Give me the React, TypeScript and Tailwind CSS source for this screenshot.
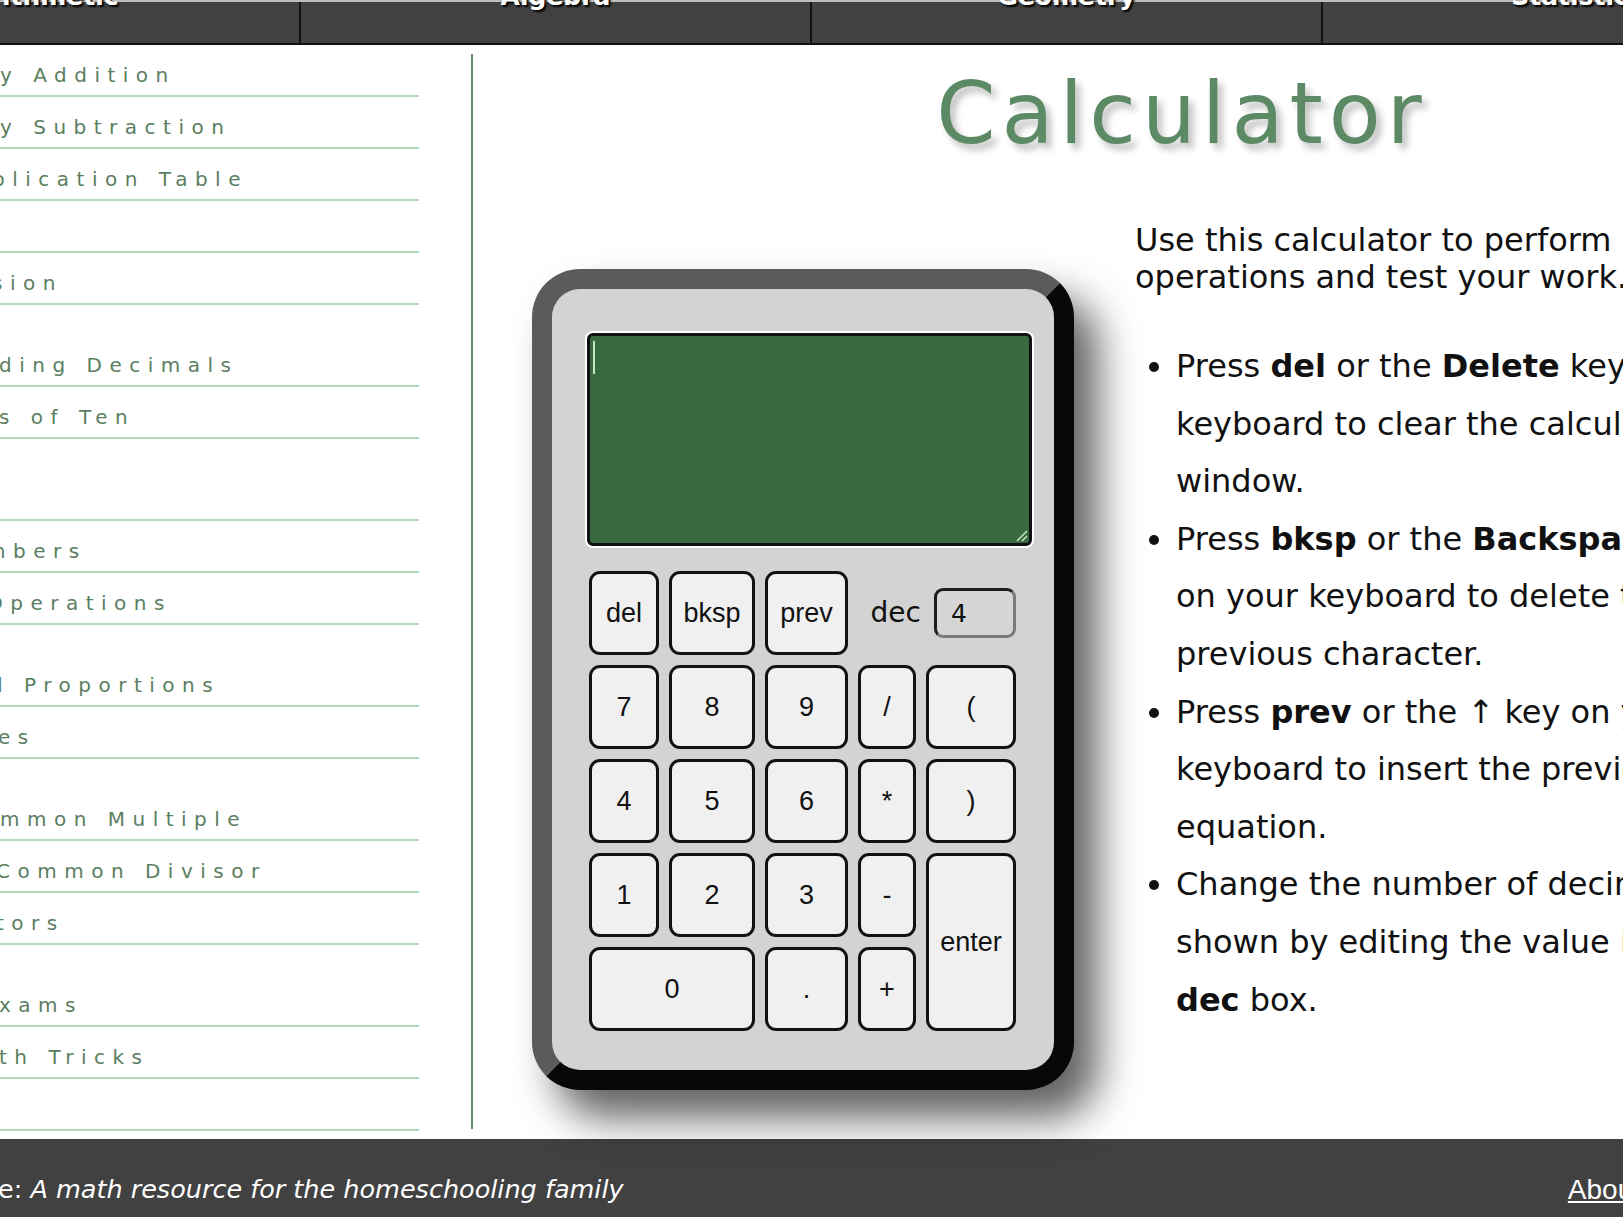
import type { ReactNode } from 'react'

const verdana = "font-['DejaVu_Sans','Verdana',sans-serif]"
const arial = "font-['Liberation_Sans','Arial',sans-serif]"

const navItems = ['Arithmetic', 'Algebra', 'Geometry', 'Statistics', 'Resources']

// visible part of each sidebar link; the page is scrolled so the start is cut off
const linkGroups: { text: string; shift: string }[][] = [
  [
    { text: 'y Addition', shift: 'ml-0' },
    { text: 'y Subtraction', shift: 'ml-0' },
    { text: 'plication Table', shift: '-ml-[8px]' },
    { text: '', shift: 'ml-0' },
    { text: 'sion', shift: '-ml-[8px]' },
  ],
  [
    { text: 'ding Decimals', shift: '-ml-[1px]' },
    { text: 's of Ten', shift: '-ml-[1px]' },
  ],
  [
    { text: '', shift: 'ml-0' },
    { text: 'mbers', shift: '-ml-[14px]' },
    { text: 'Operations', shift: '-ml-[13px]' },
  ],
  [
    { text: 'd Proportions', shift: '-ml-[10px]' },
    { text: 'es', shift: '-ml-[2px]' },
  ],
  [
    { text: 'mmon Multiple', shift: 'ml-0' },
    { text: 'Common Divisor', shift: '-ml-[4px]' },
    { text: 'tors', shift: '-ml-[4px]' },
  ],
  [
    { text: 'xams', shift: '-ml-[1px]' },
    { text: 'th Tricks', shift: '-ml-[1px]' },
    { text: '', shift: 'ml-0' },
  ],
]

function Key({ children, className = '' }: { children: ReactNode; className?: string }) {
  return (
    <button
      className={`flex items-center justify-center bg-[#f0f0f0] border-[3px] border-[#111] rounded-[11px] text-[27px] text-[#111] ${arial} ${className}`}
    >
      {children}
    </button>
  )
}

function Calculator() {
  return (
    <div className="w-[542px] h-[821px] shrink-0 mt-[50px] ml-[59px] border-[20px] border-t-[#5b5b5b] border-l-[#5b5b5b] border-r-[#080808] border-b-[#080808] rounded-[48px] bg-[#d3d3d3] pt-[44px] pl-[35px] shadow-[24px_28px_40px_rgba(0,0,0,0.62)]">
      {/* display */}
      <div className="relative w-[445px] h-[213px] bg-[#386a41] border-[3px] border-[#111] rounded-[6px] shadow-[0_0_0_2px_#fff]">
        <span className="absolute left-[3px] top-[5px] w-[2px] h-[33px] bg-[#c4e6bd]" />
        <svg className="absolute right-[1px] bottom-[1px]" width="13" height="13" viewBox="0 0 13 13">
          <line x1="12" y1="2" x2="2" y2="12" stroke="#cfe8c9" strokeWidth="1.5" />
          <line x1="12" y1="7" x2="7" y2="12" stroke="#cfe8c9" strokeWidth="1.5" />
        </svg>
      </div>

      {/* keys */}
      <div className="mt-[25px] ml-[2px] grid grid-cols-[70px_86px_83px_58px_90px] grid-rows-[84px_84px_84px_84px_84px] gap-[10px]">
        <Key>del</Key>
        <Key>bksp</Key>
        <Key>prev</Key>
        <div className="col-span-2 flex items-center justify-end gap-[13px]">
          <span className={`text-[28px] text-[#111] ${verdana}`}>dec</span>
          <input
            defaultValue="4"
            readOnly
            className={`w-[82px] h-[50px] border-[3px] border-t-[#1e1e1e] border-l-[#1e1e1e] border-r-[#7a7a7a] border-b-[#7a7a7a] rounded-[9px] bg-[#d6d6d6] pl-[14px] text-[25px] text-[#111] outline-none ${verdana}`}
          />
        </div>
        <Key>7</Key>
        <Key>8</Key>
        <Key>9</Key>
        <Key>/</Key>
        <Key>(</Key>
        <Key>4</Key>
        <Key>5</Key>
        <Key>6</Key>
        <Key>*</Key>
        <Key>)</Key>
        <Key>1</Key>
        <Key>2</Key>
        <Key>3</Key>
        <Key>-</Key>
        <Key className="row-span-2">enter</Key>
        <Key className="col-span-2">0</Key>
        <Key>.</Key>
        <Key>+</Key>
      </div>
    </div>
  )
}

export default function App() {
  return (
    <div className={`w-[1623px] h-[1217px] overflow-hidden bg-white ${verdana}`}>
      {/* top nav */}
      <header className="w-[2400px] -ml-[210px] h-[45px] flex bg-[#414141] border-t-2 border-t-[#bdbdbd] border-b-2 border-b-[#111]">
        {navItems.map(item => (
          <div key={item} className="w-[511px] shrink-0 border-r-2 border-[#111]">
            <span className="block -mt-[19px] text-center text-[25px] leading-[28px] font-bold text-white [text-shadow:2px_2px_2px_#000]">
              {item}
            </span>
          </div>
        ))}
      </header>

      <div className="flex items-start">
        {/* Sidebar */}
        <aside className="w-[471px] shrink-0">
          {linkGroups.map((group, gi) => (
            <ul key={gi} className={`w-[419px] ${gi > 0 ? 'mt-[30px]' : ''}`}>
              {group.map((link, li) => (
                <li
                  key={li}
                  className="h-[52px] border-b-2 border-[#b4d9bb] flex items-end pb-[8px] overflow-hidden"
                >
                  <span className={`whitespace-nowrap text-[20px] leading-[24px] tracking-[7.5px] text-[#5a7e60] ${link.shift}`}>
                    {link.text}
                  </span>
                </li>
              ))}
            </ul>
          ))}
        </aside>

        {/* Main content */}
        <main className="w-[1420px] shrink-0 mt-[9px] h-[1075px] border-l-2 border-[#6a8c6e] pt-[17px]">
          <h1 className="text-center text-[85px] leading-none tracking-[6px] text-[#5b8a64] [text-shadow:5px_6px_7px_rgba(0,0,0,0.25)]">
            Calculator
          </h1>

          <div className="flex items-start mt-[63px]">
            <Calculator />

            <div className="w-[631px] shrink-0 ml-[61px] mt-[3px] text-[32px] text-[#111]">
              <p className="leading-[37px] mb-[42px]">
                Use this calculator to perform basic operations and test your work.
              </p>
              <ul className="list-disc pl-[41px] leading-[57.6px]">
                <li>
                  Press <b>del</b> or the <b>Delete</b> key on your keyboard to clear the calculator window.
                </li>
                <li>
                  Press <b>bksp</b> or the <b>Backspace</b> key on your keyboard to delete the previous character.
                </li>
                <li>
                  Press <b>prev</b> or the ↑ key on your keyboard to insert the previous equation.
                </li>
                <li>
                  Change the number of decimals shown by editing the value in the <b>dec</b> box.
                </li>
              </ul>
            </div>
          </div>
        </main>
      </div>

      {/* Footer */}
      <footer className="w-[1700px] mt-[8px] h-[78px] bg-[#414141] flex items-start justify-between pt-[35px] pr-[59px] text-white">
        <p className="-ml-[2px] text-[25.5px] leading-[30px] whitespace-nowrap">
          e: <i>A math resource for the homeschooling family</i>
        </p>
        <a href="#" className={`text-[28px] leading-[32px] underline ${arial}`}>
          About
        </a>
      </footer>
    </div>
  )
}
